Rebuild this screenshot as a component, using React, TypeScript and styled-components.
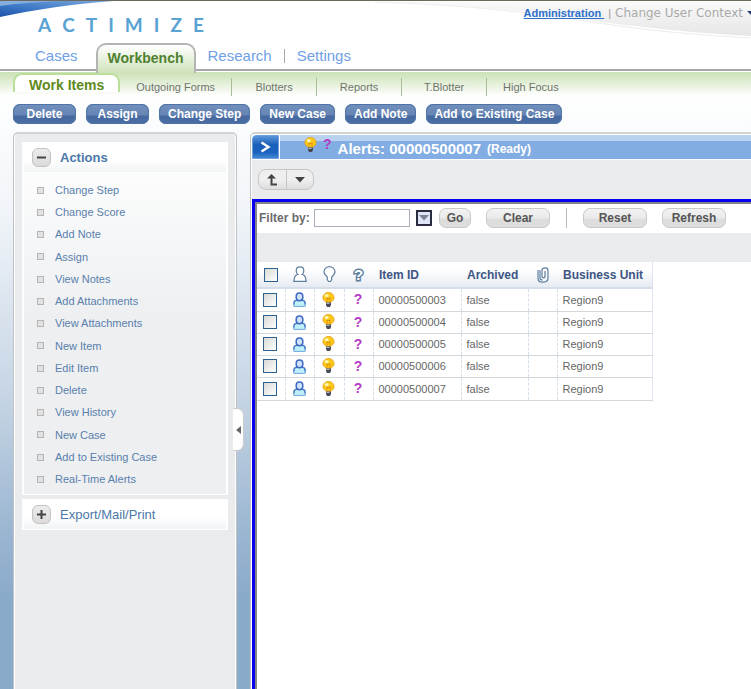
import React from "react";
import styled, { createGlobalStyle, css } from "styled-components";

const GlobalStyle = createGlobalStyle`
  *, *::before { box-sizing: border-box; }
  body {
    margin: 0;
    font-family: "Liberation Sans", Arial, sans-serif;
    font-size: 11px;
    color: #666;
  }
  button, input { font-family: inherit; }
  ul { list-style: none; margin: 0; padding: 0; }
  a { text-decoration: none; color: inherit; }
  svg { display: block; }
`;

const Page = styled.div`
  display: flex;
  flex-direction: column;
  min-height: 100vh;
  overflow: hidden;
  background: linear-gradient(#fff 90px, #fafcfd 130px, #f1f5f9 210px, #d6e1ec 325px, #c5d4e4 400px, #98b4d0 540px, #8aaaca 600px);
`;

/* ---------- header ---------- */

const Header = styled.header`
  position: relative;
  display: flex;
  justify-content: space-between;
  align-items: flex-start;
  height: 43px;
  border-top: 1px solid #6e695f;
  background: #fff;
`;

const SwooshLeft = styled.svg`
  position: absolute;
  left: 0;
  top: 0;
`;

const SwooshRight = styled.svg`
  position: absolute;
  right: 0;
  top: 0;
`;

const Logo = styled.div`
  position: relative;
  display: flex;
  gap: 11px;
  padding: 12px 0 0 38px;
  font-family: Lato, sans-serif;
  font-size: 19px;
  line-height: 24px;
  font-weight: 700;
  color: #58a2d4;
`;

const UserLinks = styled.div`
  position: relative;
  display: flex;
  align-items: center;
  gap: 4px;
  padding-top: 4px;
  line-height: 16px;
  color: #999;
`;

const AdminLink = styled.a`
  font-weight: 700;
  color: #2b71cb;
  text-decoration: underline;
  white-space: pre;
`;

const ContextButton = styled.button`
  display: flex;
  align-items: center;
  gap: 4px;
  padding: 0;
  border: 0;
  background: none;
  font-family: "DejaVu Sans", Verdana, sans-serif;
  font-size: 12px;
  line-height: 16px;
  color: #aaa;
`;

const MainNav = styled.nav`
  display: flex;
  align-items: center;
  height: 28px;
  border-bottom: 2px solid #aaa5aa;
  background: #fff;
  font-size: 15px;
  color: #6f9fe6;
`;

const MainTab = styled.a<{ $active?: boolean }>`
  padding: 0 12px;
  line-height: 28px;
  ${(p) =>
    p.$active &&
    css`
      position: relative;
      align-self: flex-start;
      height: 30px;
      padding: 0 10px;
      line-height: 26px;
      border: 2px solid #b4b4b4;
      border-bottom: 0;
      border-radius: 10px 10px 0 0;
      background: linear-gradient(#fff, #e7f1dc 50%, #cfe3ba);
      font-size: 14px;
      font-weight: 700;
      color: #4f8130;
    `}
`;

const FirstTab = styled(MainTab)`
  padding: 0 18px 0 35px;
`;

const TabDivider = styled.span`
  width: 1px;
  height: 14px;
  background: #aaa;
`;

const SubNav = styled.nav`
  display: flex;
  align-items: flex-start;
  height: 24px;
  margin-top: 1px;
  padding: 1px 13px 0;
  background: linear-gradient(#cbe1b6, #fff);
`;

const SubTabActive = styled.a`
  height: 19px;
  padding: 0 14px;
  border: 2px solid #b9df98;
  border-bottom: 0;
  border-radius: 9px 9px 0 0;
  background: #fff;
  font-size: 14px;
  line-height: 21px;
  font-weight: 700;
  color: #5f8a20;
`;

const SubTab = styled.a`
  min-width: 85px;
  height: 18px;
  margin-top: 5px;
  padding: 0 16px;
  border-right: 1px solid #a9bd98;
  text-align: center;
  line-height: 18px;
  white-space: nowrap;
  color: #70756c;
  &:last-child { border-right: 0; }
`;

const ActionBar = styled.div`
  display: flex;
  gap: 10px;
  padding: 8px 13px;
`;

const BlueButton = styled.button`
  min-width: 63px;
  height: 20px;
  padding: 0 8px;
  border: 0;
  border-radius: 7px;
  background: linear-gradient(#7290bd, #6685b4 55%, #46699f 60%, #4a6da3);
  box-shadow: inset 0 0 0 1px #4f73a6;
  font-size: 12px;
  font-weight: 700;
  line-height: 20px;
  white-space: nowrap;
  color: #fff;
  &:nth-child(n + 3) { padding: 0 9px; }
  &:last-child { padding: 0 8px; }
`;

/* ---------- sidebar ---------- */

const Columns = styled.div`
  display: flex;
  flex: 1;
  gap: 13px;
  padding-left: 13px;
`;

const Sidebar = styled.aside`
  position: relative;
  flex: none;
  display: flex;
  flex-direction: column;
  gap: 4px;
  width: 224px;
  padding: 8px;
  border: 1px solid #bfc1c4;
  border-top: 2px solid #d2d2d2;
  border-bottom: 0;
  border-radius: 5px 5px 0 0;
  background: #eaebed;
  box-shadow: inset 1px 0 #fff, inset -1px 0 #fff;
`;

const Section = styled.section`
  border: 1px solid #fff;
  border-width: 0 2px 1px;
  background: linear-gradient(#fff, #edeff1 50%);
`;

const SectionHead = styled.h2`
  display: flex;
  align-items: center;
  gap: 9px;
  height: 30px;
  margin: 0;
  padding-left: 8px;
  background: linear-gradient(#fff 60%, #f1f3f5);
  font-size: 13px;
  color: #4c78a8;
`;

const SectionHeadPlain = styled(SectionHead)`
  font-weight: 400;
`;

const ToggleButton = styled.button`
  display: grid;
  place-items: center;
  width: 19px;
  height: 19px;
  padding: 0;
  border: 1px solid #c4c2c2;
  border-radius: 6px;
  background: linear-gradient(#ececec, #dcdada);
`;

const ActionList = styled.ul`
  display: grid;
  grid-auto-rows: 22px 22px 22px 23px;
  padding: 7px 0 4px;
`;

const ActionItem = styled.li`
  display: flex;
  align-items: center;
  gap: 11px;
  padding-left: 13px;
  color: #5a80ac;
  &::before {
    content: "";
    width: 7px;
    height: 7px;
    border: 1px solid #b4b4b4;
    background: #e2e2e2;
  }
`;

const CollapseHandle = styled.button`
  position: absolute;
  top: 274px;
  right: -8px;
  display: grid;
  place-items: center;
  width: 11px;
  height: 43px;
  padding: 0;
  border: 1px solid #ccc;
  border-left: 0;
  border-radius: 0 7px 7px 0;
  background: #fff;
`;

/* ---------- work area ---------- */

const Workspace = styled.main`
  flex: 1;
  min-width: 0;
  display: flex;
  flex-direction: column;
  padding-left: 1px;
  border-left: 1px solid #bfc1c4;
  border-top: 2px solid #d2d2d2;
  border-radius: 5px 0 0 0;
  background: #fff;
`;

const TitleBar = styled.div`
  display: flex;
  gap: 1px;
  height: 25px;
  padding-top: 1px;
`;

const ExpandButton = styled.button`
  display: grid;
  place-items: center;
  width: 27px;
  padding: 0;
  border: 1px solid #6ba0dc;
  border-radius: 4px 0 0 0;
  background: linear-gradient(#5b95da, #1a5fb8 40%, #1a63bf 75%, #4487d2);
`;

const Title = styled.h1`
  flex: 1;
  display: flex;
  align-items: center;
  gap: 6px;
  margin: 0;
  padding-left: 24px;
  background: linear-gradient(#b9d2f0 6px, #82ade2 6px);
  font-size: 15px;
  line-height: 24px;
  color: #fff;
`;

const TitleIcons = styled.span`
  display: flex;
  align-items: flex-start;
  gap: 6px;
  align-self: flex-start;
  padding-top: 2px;
`;

const TitleText = styled.span`
  padding-top: 3px;
  white-space: nowrap;
`;

const Status = styled.small`
  padding-top: 3px;
  font-size: 12px;
`;

const Purple = styled.span`
  font-size: 14px;
  line-height: 15px;
  font-weight: 700;
  color: #b43bc4;
`;

const ToolRow = styled.div`
  display: flex;
  padding: 9px 6px;
  border-top: 1px solid #fff;
  background: #eaebed;
`;

const SplitButton = styled.div`
  display: flex;
  height: 21px;
  border: 1px solid #c6c6c6;
  border-radius: 8px;
  background: linear-gradient(#efefef 50%, #dedede);
`;

const SplitPart = styled.button`
  display: grid;
  place-items: center;
  width: 27px;
  padding: 0;
  border: 0;
  background: none;
  & + & { border-left: 1px solid #c6c6c6; }
`;

const Frame = styled.div`
  flex: 1;
  border-left: 3px solid #0a00f0;
  border-top: 3px solid #0a00f0;
`;

const FrameInner = styled.div`
  height: 100%;
  border-left: 2px solid #85858a;
  border-top: 2px solid #85858a;
  background: #fff;
`;

const FilterBar = styled.form`
  display: flex;
  align-items: center;
  height: 29px;
  padding: 0 2px 2px;
  background: #fff;
`;

const FilterLabel = styled.label`
  flex: none;
  width: 55px;
  font-size: 12px;
  font-weight: 700;
  color: #6b6b6b;
`;

const FilterInput = styled.input`
  width: 96px;
  height: 18px;
  margin-right: 6px;
  border: 1px solid #a9afba;
  background: #fff;
`;

const HistoryButton = styled.button`
  display: grid;
  place-items: center;
  width: 16px;
  height: 16px;
  margin-right: 7px;
  padding: 0;
  border: 2px solid #2a2a40;
  background: #dfe5f6;
`;

const GreyButton = styled.button<{ $wide?: boolean }>`
  flex: none;
  width: ${(p) => (p.$wide ? 64 : 32)}px;
  height: 20px;
  margin-right: 15px;
  padding: 0;
  border: 1px solid #c9c9c9;
  border-radius: 7px;
  background: linear-gradient(#f2f2f2, #eaeaea 50%, #dcdcdc 60%, #e0dfdf);
  font-size: 12px;
  font-weight: 700;
  color: #555;
`;

const FilterDivider = styled.span`
  flex: none;
  width: 1px;
  height: 20px;
  margin: 0 16px 0 1px;
  background: #b5b9be;
`;

const GreyStrip = styled.div`
  height: 29px;
  background: #eaebed;
`;

const Table = styled.table`
  table-layout: fixed;
  width: 395px;
  border-collapse: collapse;
  border-right: 1px solid #dde4ee;
`;

const Row = styled.tr`
  height: 22px;
  &:nth-child(4n + 1) { height: 23px; }
`;

const Th = styled.th`
  height: 26px;
  padding: 0 0 0 6px;
  border-bottom: 2px solid #d5deea;
  background: linear-gradient(#fff 30%, #e6ebf3);
  text-align: left;
  font-size: 12px;
  white-space: nowrap;
  color: #3e5684;
`;

const Td = styled.td`
  padding: 0 0 0 5px;
  border-bottom: 1px solid #d4d8dd;
  border-right: 1px dashed #d5dfea;
  background: #fff;
  white-space: nowrap;
`;

const IconBox = styled.span`
  display: flex;
  justify-content: center;
  padding-right: 6px;
`;

const Check = styled.input`
  appearance: none;
  display: block;
  width: 14px;
  height: 14px;
  margin: 0 0 0 1px;
  border: 1px solid #2d618f;
  background: linear-gradient(135deg, #d9d9d4, #fff);
  &:checked { background: #2d618f; }
`;

const HollowMark = styled.span`
  font-size: 15px;
  line-height: 17px;
  font-weight: 700;
  color: #fff;
  -webkit-text-stroke: 3px #5f7f9e;
  paint-order: stroke fill;
`;

/* ---------- icons ---------- */

const Bulb = () => (
  <svg width="13" height="16" viewBox="0 0 13 16">
    <path d="M6.500.5a5.400 5.200 0 0 0-5.600 5.100c0 2 1.400 3.200 3.100 4.600h5c1.700-1.400 3.100-2.600 3.100-4.600A5.400 5.200 0 0 0 6.500.5z" fill="#fdc918" stroke="#e39a10" strokeWidth=".8" />
    <ellipse cx="4.700" cy="3.600" rx="2" ry="1.600" fill="#fff8b0" />
    <path d="M5 5.500v4M8 5.500v4M5 6.500h3" stroke="#d8860b" strokeWidth=".8" fill="none" />
    <path d="M4 10.500h5v2.500L8 15H5l-1-2z" fill="#474b58" />
    <path d="M4.500 11.500h3" stroke="#a9b6c9" strokeWidth="1" />
  </svg>
);

const Person = () => (
  <svg width="13" height="15" viewBox="0 0 13 15">
    <path d="M.8 14.400V11c0-1.700 1.200-2.700 3-2.700h5.400c1.800 0 3 1 3 2.700v3.400z" fill="#bff0f8" stroke="#6fa8dc" strokeWidth="1" />
    <path d="M1 12.500V11c0-1.600 1-2.600 2.800-2.600h5.400c1.800 0 2.800 1 2.800 2.600v1.500" fill="none" stroke="#4a78c8" strokeWidth="1.300" />
    <rect x="3.200" y="1" width="6.600" height="7.800" rx="3.200" fill="#cfe4fb" stroke="#3f68c4" strokeWidth="1.500" />
  </svg>
);

const PersonOutline = () => (
  <svg width="14" height="17" viewBox="0 0 14 17" fill="#fff" stroke="#5f7f9e" strokeWidth="1.200">
    <path d="M4.800 8.500C3.600 7.500 3.200 6 3.200 4.500c0-2.300 1.500-3.700 3.800-3.700s3.800 1.400 3.800 3.700c0 1.500-.4 3-1.600 4 2.500.3 3 1.300 3.400 3.500l.6 3.400H.8l.6-3.400c.4-2.200.9-3.200 3.400-3.500z" />
  </svg>
);

const BulbOutline = () => (
  <svg width="13" height="17" viewBox="0 0 13 17" fill="#fff" stroke="#5f7f9e" strokeWidth="1.200">
    <path d="M4.300 13.500V11C2.300 9.200 1 7.700 1 5.800a5.500 5.200 0 0 1 11 0c0 1.900-1.300 3.400-3.300 5.200v2.500L7.500 15.500h-2z" />
  </svg>
);

const Clip = () => (
  <svg width="12" height="16" viewBox="0 0 12 16" fill="none" stroke="#5f7f9e" strokeWidth="1.200">
    <path d="M1 3v8.500C1 14 2.700 15.200 5.500 15.200S11 14 11 11.500V3.500C11 1.700 9.800.8 8 .8S5 1.700 5 3.500v6.300c0 1.400 3 1.400 3 0V4M3 3v8c0 1.300.8 2 2.500 2" />
  </svg>
);

const Down = ({ color = "#444" }: { color?: string }) => (
  <svg width="10" height="6" viewBox="0 0 10 6">
    <path d="M0 0h10L5 5.500z" fill={color} />
  </svg>
);

/* ---------- data ---------- */

const toolbar = ["Delete", "Assign", "Change Step", "New Case", "Add Note", "Add to Existing Case"];
const subTabs = ["Outgoing Forms", "Blotters", "Reports", "T.Blotter", "High Focus"];
const actions = [
  "Change Step", "Change Score", "Add Note", "Assign", "View Notes", "Add Attachments",
  "View Attachments", "New Item", "Edit Item", "Delete", "View History", "New Case",
  "Add to Existing Case", "Real-Time Alerts",
];
const items = ["00000500003", "00000500004", "00000500005", "00000500006", "00000500007"];
const columnWidths = [28, 29, 30, 29, 88, 67, 29, 95];

export default function App() {
  return (
    <Page>
      <GlobalStyle />
      <Header>
        <SwooshLeft width="150" height="20" viewBox="0 0 150 20">
          <defs>
            <linearGradient id="swooshBlue" x1="0" y1="1" x2="1" y2="0">
              <stop offset="0" stopColor="#1f52a8" />
              <stop offset=".4" stopColor="#3c78c6" />
              <stop offset="1" stopColor="#7fa9dc" />
            </linearGradient>
          </defs>
          <path d="M0 0h114C72 3 32 9 0 16z" fill="url(#swooshBlue)" />
          <path d="M0 0h62C40 1 20 2 0 5z" fill="#86aedd" />
        </SwooshLeft>
        <SwooshRight width="376" height="40" viewBox="0 0 376 40">
          <defs>
            <linearGradient id="swooshGrey" x1="0" y1="0" x2="0" y2="1">
              <stop offset="0" stopColor="#fafafa" />
              <stop offset="1" stopColor="#e6e6e6" />
            </linearGradient>
          </defs>
          <path d="M20 1C130 5 190 17 260 25c40 5 80 8 116 10V0z" fill="url(#swooshGrey)" />
          <path d="M0 1c130 4 190 17 260 26 40 5 80 8 116 10" fill="none" stroke="#ececec" />
        </SwooshRight>
        <Logo role="img" aria-label="ACTIMIZE">
          {"ACTIMIZE".split("").map((letter, i) => (
            <span key={i}>{letter}</span>
          ))}
        </Logo>
        <UserLinks>
          <AdminLink href="#admin">{"Administration "}</AdminLink>
          <span>|</span>
          <ContextButton>
            Change User Context
            <svg width="4" height="4" viewBox="0 0 4 4">
              <path d="M0 0h4v4z" fill="#2a3a78" />
            </svg>
          </ContextButton>
        </UserLinks>
      </Header>

      <MainNav>
        <FirstTab href="#cases">Cases</FirstTab>
        <MainTab href="#workbench" $active>Workbench</MainTab>
        <MainTab href="#research">Research</MainTab>
        <TabDivider />
        <MainTab href="#settings">Settings</MainTab>
      </MainNav>
      <SubNav>
        <SubTabActive href="#items">Work Items</SubTabActive>
        {subTabs.map((t) => (
          <SubTab key={t} href="#tab">{t}</SubTab>
        ))}
      </SubNav>
      <ActionBar>
        {toolbar.map((t) => (
          <BlueButton key={t}>{t}</BlueButton>
        ))}
      </ActionBar>

      <Columns>
        <Sidebar>
          <Section>
            <SectionHead>
              <ToggleButton aria-label="Collapse Actions">
                <svg width="9" height="9"><path d="M0 4.500h9" stroke="#444" strokeWidth="2" /></svg>
              </ToggleButton>
              Actions
            </SectionHead>
            <ActionList>
              {actions.map((a) => (
                <ActionItem key={a}><a href="#action">{a}</a></ActionItem>
              ))}
            </ActionList>
          </Section>
          <Section>
            <SectionHeadPlain>
              <ToggleButton aria-label="Expand Export/Mail/Print">
                <svg width="9" height="9"><path d="M0 4.500h9M4.500 0v9" stroke="#444" strokeWidth="2" /></svg>
              </ToggleButton>
              Export/Mail/Print
            </SectionHeadPlain>
          </Section>
          <CollapseHandle aria-label="Collapse sidebar">
            <svg width="5" height="8"><path d="M5 0v8L0 4z" fill="#666" /></svg>
          </CollapseHandle>
        </Sidebar>

        <Workspace>
          <TitleBar>
            <ExpandButton aria-label="Expand">
              <svg width="11" height="12" viewBox="0 0 11 12">
                <path d="M1.500 1.500L8.500 6l-7 4.500" fill="none" stroke="#fff" strokeWidth="2.400" />
              </svg>
            </ExpandButton>
            <Title>
              <TitleIcons>
                <Bulb />
                <Purple>?</Purple>
              </TitleIcons>
              <TitleText>Alerts: 00000500007</TitleText>
              <Status>(Ready)</Status>
            </Title>
          </TitleBar>
          <ToolRow>
            <SplitButton>
              <SplitPart aria-label="Up">
                <svg width="11" height="12" viewBox="0 0 11 12">
                  <path d="M4.500 3v7.500H10" fill="none" stroke="#444" strokeWidth="2" />
                  <path d="M0 4.500L4.500 0 9 4.500z" fill="#444" />
                </svg>
              </SplitPart>
              <SplitPart aria-label="More"><Down /></SplitPart>
            </SplitButton>
          </ToolRow>
          <Frame>
            <FrameInner>
              <FilterBar onSubmit={(e) => e.preventDefault()}>
                <FilterLabel htmlFor="filter">Filter by:</FilterLabel>
                <FilterInput id="filter" type="text" />
                <HistoryButton type="button" aria-label="Filter history"><Down color="#7f8492" /></HistoryButton>
                <GreyButton>Go</GreyButton>
                <GreyButton type="button" $wide>Clear</GreyButton>
                <FilterDivider />
                <GreyButton type="button" $wide>Reset</GreyButton>
                <GreyButton type="button" $wide>Refresh</GreyButton>
              </FilterBar>
              <GreyStrip />
              <Table>
                <colgroup>
                  {columnWidths.map((w, i) => <col key={i} width={w} />)}
                </colgroup>
                <thead>
                  <tr>
                    <Th><Check type="checkbox" aria-label="Select all" /></Th>
                    <Th><IconBox><PersonOutline /></IconBox></Th>
                    <Th><IconBox><BulbOutline /></IconBox></Th>
                    <Th><IconBox><HollowMark>?</HollowMark></IconBox></Th>
                    <Th>Item ID</Th>
                    <Th>Archived</Th>
                    <Th><IconBox><Clip /></IconBox></Th>
                    <Th>Business Unit</Th>
                  </tr>
                </thead>
                <tbody>
                  {items.map((id) => (
                    <Row key={id}>
                      <Td><Check type="checkbox" aria-label={`Select ${id}`} /></Td>
                      <Td><IconBox><Person /></IconBox></Td>
                      <Td><IconBox><Bulb /></IconBox></Td>
                      <Td><IconBox><Purple>?</Purple></IconBox></Td>
                      <Td>{id}</Td>
                      <Td>false</Td>
                      <Td />
                      <Td>Region9</Td>
                    </Row>
                  ))}
                </tbody>
              </Table>
            </FrameInner>
          </Frame>
        </Workspace>
      </Columns>
    </Page>
  );
}
